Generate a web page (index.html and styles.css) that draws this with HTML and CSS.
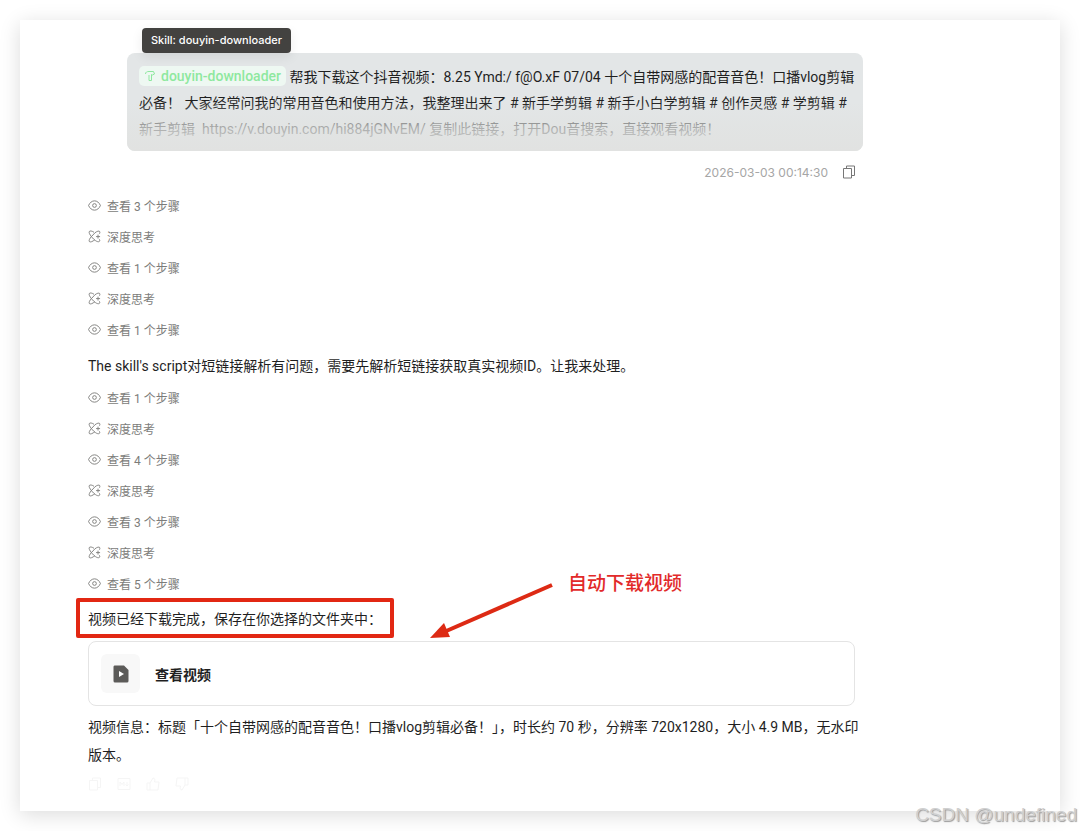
FILE: index.html
```html
<!DOCTYPE html>
<html lang="zh-CN">
<head>
    <meta charset="UTF-8">
    <meta name="viewport" content="width=device-width, initial-scale=1.0">
    <title>douyin-downloader</title>
    <link rel="stylesheet" href="styles.css">
</head>
<body>
    <!-- shared icons -->
    <svg class="sprite" aria-hidden="true">
        <symbol id="eye" viewBox="0 0 14 14">
            <path d="M.600 7C2 3.800 4.300 2 7 2S12 3.800 13.400 7C12 10.200 9.700 12 7 12S2 10.200 .600 7Z"/>
            <circle cx="7" cy="7" r="2"/>
        </symbol>
        <symbol id="think" viewBox="0 0 14 14">
            <path d="M6.500 2.500C4.500 1 2.200 .700 1.500 1.500C.700 2.500 1.700 4.800 3.800 7.200M3.800 6.800C1.700 9.200 .700 11.500 1.500 12.500C2.500 13.400 5 12.500 7.500 10.300"/>
            <path d="M3.800 7.200C6.500 10.800 10 13.300 12 12.500C12.800 12.100 12.800 11 12.300 10M4 6.800L7.500 3C9.800 1.200 11.800 .800 12.500 1.500C13 2.200 12.800 3.200 12.400 4M10.800 5V9.200M8.700 7.100H13"/>
        </symbol>
        <symbol id="copy" viewBox="0 0 14 14">
            <path d="M4.500 3.500V1H12.500V10.500H9.500M1.500 3.500H9.500V13H1.500Z"/>
        </symbol>
    </svg>

    <main class="window">
        <div class="chat">
            <section class="message">
                <div class="tooltip" role="tooltip">Skill: douyin-downloader</div>
                <div class="bubble">
                    <p><span class="skill"><svg class="skill-icon" viewBox="0 0 12 12"><path d="M1.500 4C1.500 2 3 1.500 5 1.500H9.500L10.500 4L8.500 5L7.500 4.500V10.500H5V5"/></svg>douyin-downloader</span> 帮我下载这个抖音视频：8.25 Ymd:/ f@O.xF 07/04 十个自带网感的配音音色！口播vlog剪辑<br>必备！ 大家经常问我的常用音色和使用方法，我整理出来了 # 新手学剪辑 # 新手小白学剪辑 # 创作灵感 # 学剪辑 #<br>新手剪辑&nbsp; https://v.douyin.com/hi884jGNvEM/ 复制此链接，打开Dou音搜索，直接观看视频！</p>
                </div>
                <div class="meta">
                    <time datetime="2026-03-03T00:14:30">2026-03-03 00:14:30</time>
                    <button class="icon-btn" type="button" aria-label="复制"><svg><use href="#copy"/></svg></button>
                </div>
            </section>

            <section class="reply">
                <div class="steps">
                    <button class="step" type="button"><svg><use href="#eye"/></svg>查看 3 个步骤</button>
                    <button class="step" type="button"><svg><use href="#think"/></svg>深度思考</button>
                    <button class="step" type="button"><svg><use href="#eye"/></svg>查看 1 个步骤</button>
                    <button class="step" type="button"><svg><use href="#think"/></svg>深度思考</button>
                    <button class="step" type="button"><svg><use href="#eye"/></svg>查看 1 个步骤</button>
                </div>
                <p class="text">The skill's script对短链接解析有问题，需要先解析短链接获取真实视频ID。让我来处理。</p>
                <div class="steps">
                    <button class="step" type="button"><svg><use href="#eye"/></svg>查看 1 个步骤</button>
                    <button class="step" type="button"><svg><use href="#think"/></svg>深度思考</button>
                    <button class="step" type="button"><svg><use href="#eye"/></svg>查看 4 个步骤</button>
                    <button class="step" type="button"><svg><use href="#think"/></svg>深度思考</button>
                    <button class="step" type="button"><svg><use href="#eye"/></svg>查看 3 个步骤</button>
                    <button class="step" type="button"><svg><use href="#think"/></svg>深度思考</button>
                    <button class="step" type="button"><svg><use href="#eye"/></svg>查看 5 个步骤</button>
                </div>
                <div class="done">
                    <p class="text">视频已经下载完成，保存在你选择的文件夹中：</p>
                    <span class="mark-box"></span>
                    <svg class="mark-arrow" viewBox="0 0 124 58">
                        <path d="M122 3L14 50" stroke="#dd2a14" stroke-width="4"/>
                        <path d="M0 56L14 41L20 55Z" fill="#dd2a14"/>
                    </svg>
                    <span class="mark-text">自动下载视频</span>
                </div>
                <button class="file" type="button">
                    <span class="file-icon">
                        <svg viewBox="0 0 16 18"><path d="M1.500 .500H11L15.500 5V16A1.500 1.500 0 0 1 14 17.500H2A1.500 1.500 0 0 1 .500 16V2A1.500 1.500 0 0 1 1.500 .500Z" fill="#5c5b59"/><path d="M6 6L11 9L6 12Z" fill="#fff"/></svg>
                    </span>
                    查看视频
                </button>
                <p class="text">视频信息：标题「十个自带网感的配音音色！口播vlog剪辑必备！」，时长约 70 秒，分辨率 720x1280，大小 4.9 MB，无水印<br>版本。</p>
                <div class="actions">
                    <button class="icon-btn" type="button" aria-label="复制"><svg><use href="#copy"/></svg></button>
                    <button class="icon-btn" type="button" aria-label="Markdown"><svg viewBox="0 0 14 14"><path d="M1 1.500H13V12.500H1ZM3 9V5L5 7.500L7 5V9M10 5V9M8.500 7.500L10 9L11.500 7.500"/></svg></button>
                    <button class="icon-btn" type="button" aria-label="赞"><svg viewBox="0 0 14 14"><path d="M1 6H4V13H1ZM4 6L7 1C9 1 9 3 8.500 5H13L12 13H4"/></svg></button>
                    <button class="icon-btn" type="button" aria-label="踩"><svg viewBox="0 0 14 14"><path d="M13 8H10V1H13ZM10 8L7 13C5 13 5 11 5.500 9H1L2 1H10"/></svg></button>
                </div>
            </section>
        </div>
    </main>
    <div class="watermark">CSDN @undefined</div>
</body>
</html>
```
FILE: styles.css
```css
* {
    box-sizing: border-box;
}
body {
    margin: 0;
    padding: 20px;
    position: relative;
    background-color: #fff;
    color: #1f1f1f;
    font-family: Roboto, "Noto Sans CJK SC", sans-serif;
    font-size: 14px;
}
p {
    margin: 0;
}
button {
    display: flex;
    align-items: center;
    padding: 0;
    border: none;
    background: none;
    font-family: inherit;
    cursor: pointer;
}
.sprite {
    position: absolute;
    width: 0;
    height: 0;
}
.window {
    padding: 33px 68px 20px;
    background-color: #fff;
    box-shadow: 0 4px 20px rgba(0, 0, 0, 0.14);
}
.chat {
    max-width: 775px;
}

/* user message */
.message {
    position: relative;
    margin-left: 39px;
}
.tooltip {
    position: absolute;
    top: -25px;
    left: 15px;
    z-index: 1;
    padding: 0 9px;
    border-radius: 4px;
    background-color: #434240;
    color: #fff;
    font-family: Inter, sans-serif;
    font-size: 11px;
    font-weight: 500;
    line-height: 25px;
    box-shadow: 0 4px 12px rgba(0, 0, 0, 0.08);
}
.bubble {
    position: relative;
    padding: 11px 12px 9px;
    border-radius: 8px;
    background-color: #e3e6e7;
    line-height: 26px;
    white-space: nowrap;
}
.bubble::after {
    content: "";
    position: absolute;
    inset: 50% 0 0;
    border-radius: 0 0 8px 8px;
    background: linear-gradient(rgba(225, 227, 226, 0), rgba(225, 227, 226, 0.7) 50%, #e1e2e1);
}
.skill {
    display: inline-flex;
    align-items: center;
    gap: 5px;
    height: 20px;
    padding: 0 5px;
    border-radius: 5px;
    background-color: #eef8f2;
    color: #8ee89f;
    font-weight: 500;
}
.skill-icon {
    width: 12px;
    height: 12px;
    fill: none;
    stroke: #8ee89f;
}
.meta {
    display: flex;
    justify-content: flex-end;
    align-items: center;
    gap: 14px;
    height: 20px;
    margin-top: 11px;
    padding-right: 7px;
    color: #a6a6a6;
    font-family: Inter, sans-serif;
    font-size: 12px;
}
.icon-btn svg {
    width: 14px;
    height: 14px;
    fill: none;
    stroke: #777;
}

/* assistant reply */
.reply {
    margin: 13px 8px 0 0;
}
.steps {
    display: flex;
    flex-direction: column;
    align-items: flex-start;
    gap: 11px;
}
.step {
    gap: 6px;
    height: 20px;
    color: #7c7c7a;
    font-size: 12px;
}
.step svg {
    width: 13px;
    height: 13px;
    fill: none;
    stroke: #7c7c7a;
}
.text {
    line-height: 28px;
    white-space: nowrap;
}
.steps + .text {
    margin: 13px 0 7px;
}
.done {
    position: relative;
    margin: 12px 0 8px;
}
.mark-box {
    position: absolute;
    top: -7px;
    left: -12px;
    width: 318px;
    height: 40px;
    border: 4px solid #e22713;
    border-radius: 2px;
}
.mark-arrow {
    position: absolute;
    top: -23px;
    left: 342px;
    width: 124px;
    height: 58px;
}
.mark-text {
    position: absolute;
    top: -35px;
    left: 480px;
    color: #e22a2a;
    font-size: 19px;
    font-weight: 500;
    line-height: 28px;
}
.file {
    width: 100%;
    gap: 15px;
    margin-bottom: 7px;
    padding: 12px;
    border: 1px solid #e4e4e4;
    border-radius: 8px;
    color: #1f1f1f;
    font-size: 14px;
    font-weight: 700;
}
.file-icon {
    display: flex;
    justify-content: center;
    align-items: center;
    width: 39px;
    height: 39px;
    border-radius: 6px;
    background-color: #f8f8f8;
}
.file-icon svg {
    width: 16px;
    height: 18px;
}
.actions {
    display: flex;
    gap: 15px;
    margin-top: 8px;
}
.actions svg {
    stroke: #f5f5f5;
}

.watermark {
    position: absolute;
    right: 3px;
    bottom: 4px;
    color: #d0d0d0;
    font-family: "Liberation Sans", Arial, sans-serif;
    font-size: 19px;
    line-height: 24px;
    text-shadow: 1px 1px 1px #999;
}
```
